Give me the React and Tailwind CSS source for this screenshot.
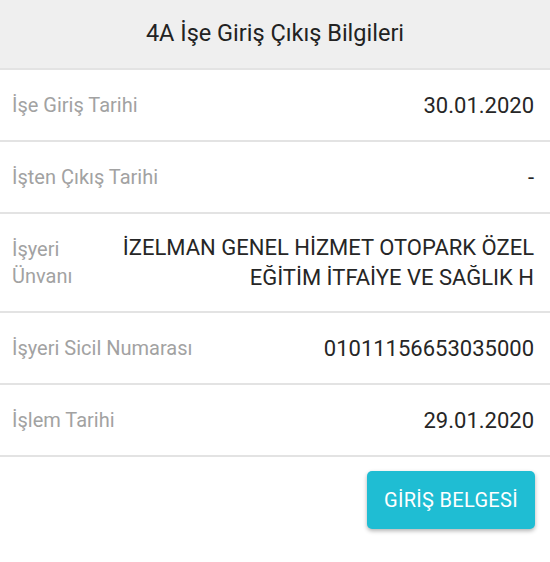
const rows = [
  { label: "İşe Giriş Tarihi", value: "30.01.2020" },
  { label: "İşten Çıkış Tarihi", value: "-" },
  {
    label: "İşyeri Ünvanı",
    value: "İZELMAN GENEL HİZMET OTOPARK ÖZEL EĞİTİM İTFAİYE VE SAĞLIK H",
    tall: true,
  },
  { label: "İşyeri Sicil Numarası", value: "01011156653035000" },
  { label: "İşlem Tarihi", value: "29.01.2020" },
];

export default function App() {
  return (
    <div className="w-[550px] h-[562px] bg-white font-['Roboto',sans-serif]">
      <div className="h-[70px] bg-[#efefef] border-b-2 border-[#e3e3e3] flex items-center justify-center">
        <h1 className="text-[23.5px] text-[#222]">4A İşe Giriş Çıkış Bilgileri</h1>
      </div>
      {rows.map((row, i) =>
        row.tall ? (
          <div key={i} className="h-[99px] border-b-2 border-[#e3e3e3] flex items-center pl-3 pr-4">
            <span className="w-[100px] shrink-0 text-[20px] leading-[27px] text-[#a2a2a2]">{row.label}</span>
            <span className="flex-1 text-right text-[22px] leading-[30px] text-[#262626]">{row.value}</span>
          </div>
        ) : (
          <div key={i} className="h-[72px] border-b-2 border-[#e3e3e3] flex items-center justify-between pl-3 pr-4">
            <span className="text-[20px] text-[#a2a2a2]">{row.label}</span>
            <span className="text-[22px] text-[#262626]">{row.value}</span>
          </div>
        )
      )}
      <div className="flex justify-end pt-[14px] pr-[15px]">
        <button className="w-[168px] h-[58px] rounded-[5px] bg-[#1fbdd3] text-white text-[20px] font-normal tracking-[0.3px] shadow-[0_2px_4px_rgba(0,0,0,0.3)]">
          GİRİŞ BELGESİ
        </button>
      </div>
    </div>
  );
}
